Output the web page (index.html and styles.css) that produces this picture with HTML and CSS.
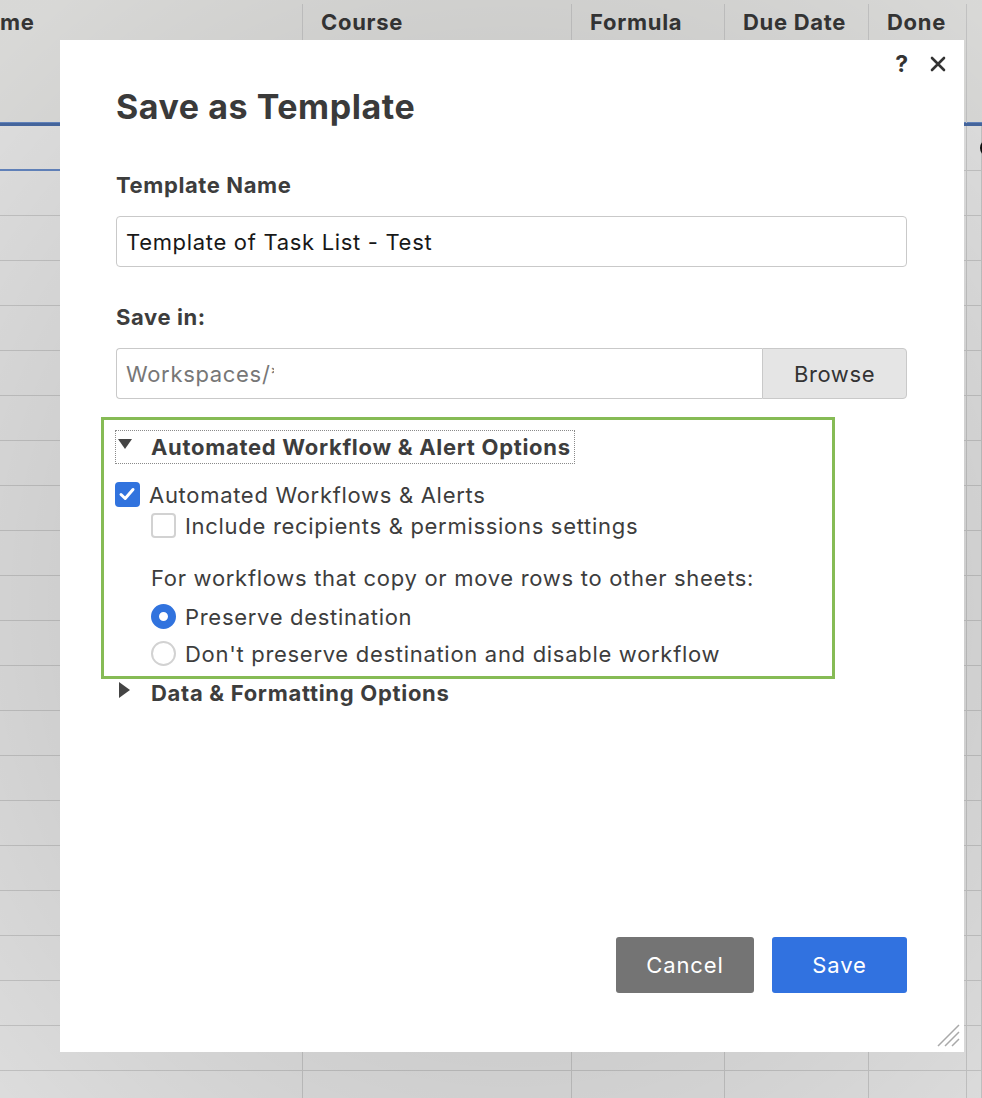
FILE: index.html
```html
<!DOCTYPE html>
<html lang="en">
<head>
<meta charset="utf-8">
<title>Save as Template</title>
<link rel="stylesheet" href="styles.css">
</head>
<body>
<div class="sheet">
  <div class="sheet-head">
    <div class="hcell col1">me</div>
    <div class="hcell col2">Course</div>
    <div class="hcell col3">Formula</div>
    <div class="hcell col4">Due Date</div>
    <div class="hcell col5">Done</div>
    <div class="hcell col6"></div>
  </div>
  <div class="sheet-first">
    <div class="fcell col1 blue"></div>
    <div class="fcell col2"></div>
    <div class="fcell col3"></div>
    <div class="fcell col4"></div>
    <div class="fcell col5"></div>
    <div class="fcell col6"><span class="ring"></span></div>
  </div>
  <div class="sheet-body">
    <div class="bcol col1"></div>
    <div class="bcol col2"></div>
    <div class="bcol col3"></div>
    <div class="bcol col4"></div>
    <div class="bcol col5"></div>
    <div class="bcol col6"></div>
  </div>
</div>

<div class="backdrop"></div>

<div class="dialog">
  <div class="dialog-tools">
    <span class="help">?</span>
    <svg class="close" width="16" height="16" viewBox="0 0 16 16"><path d="M2 2L14 14M14 2L2 14" stroke="#333" stroke-width="2.6" stroke-linecap="round"/></svg>
  </div>

  <h1 class="title">Save as Template</h1>

  <div class="label">Template Name</div>
  <div class="field"><span class="field-text">Template of Task List - Test</span></div>

  <div class="label label-save">Save in:</div>
  <div class="field-group">
    <div class="field field-path"><span class="placeholder">Workspaces/*</span></div>
    <div class="browse">Browse</div>
  </div>

  <div class="options-box">
    <div class="section-head focused">
      <span class="tri-down"></span>
      <span class="section-title">Automated Workflow &amp; Alert Options</span>
    </div>
    <div class="opt-row">
      <span class="check checked"><svg width="24" height="24" viewBox="0 0 24 24"><path d="M6 12.5L10.2 16.5L18 7.5" fill="none" stroke="#fff" stroke-width="3" stroke-linecap="round" stroke-linejoin="round"/></svg></span>
      <span class="opt-text">Automated Workflows &amp; Alerts</span>
    </div>
    <div class="opt-row indent row-include">
      <span class="check"></span>
      <span class="opt-text">Include recipients &amp; permissions settings</span>
    </div>
    <div class="note indent">For workflows that copy or move rows to other sheets:</div>
    <div class="opt-row indent row-radio1">
      <span class="radio on"></span>
      <span class="opt-text">Preserve destination</span>
    </div>
    <div class="opt-row indent row-radio2">
      <span class="radio"></span>
      <span class="opt-text">Don't preserve destination and disable workflow</span>
    </div>
  </div>

  <div class="section-head collapsed">
    <span class="tri-right"></span>
    <span class="section-title">Data &amp; Formatting Options</span>
  </div>

  <div class="footer">
    <div class="btn btn-cancel">Cancel</div>
    <div class="btn btn-save">Save</div>
  </div>

  <svg class="grip" width="24" height="24" viewBox="0 0 24 24"><path d="M23 2L2 23M23 9L9 23M23 16L16 23" stroke="#a9a9a9" stroke-width="1.5"/></svg>
</div>
</body>
</html>
```

FILE: styles.css
```css
* { box-sizing: border-box; }

html, body {
  margin: 0;
  padding: 0;
}

body {
  width: 982px;
  height: 1098px;
  overflow: hidden;
  position: relative;
  font-family: Inter, "Noto Sans", "Liberation Sans", sans-serif;
  background: #ffffff;
}

/* ---------- background sheet ---------- */
.sheet {
  width: 982px;
  height: 1098px;
  display: flex;
  flex-direction: column;
  background: #fdfdfd;
}

.sheet-head,
.sheet-first,
.sheet-body {
  display: grid;
  grid-template-columns: 303px 269px 153px 144px 98px 1fr;
}

.sheet-head {
  height: 126px;
  background: #f6f6f4;
  border-bottom: 3px solid #4f74b4;
  box-shadow: inset 0 -1px 0 #6f95d6;
}

.hcell {
  padding: 4px 0 0 18px;
  font-size: 22px;
  font-weight: 700;
  color: #3c3c3c;
  line-height: 28px;
  letter-spacing: 0.7px;
  margin-top: 4px;
  border-right: 1px solid #dcdcdc;
}

.hcell.col1 { padding-left: 0; }

.sheet-first {
  height: 45px;
}

.fcell {
  border-right: 1px solid #dcdcdc;
  border-bottom: 1px solid #dcdcdc;
  position: relative;
}

.fcell.blue { border-bottom: 2px solid #6f95d6; }

.ring {
  position: absolute;
  left: 13px;
  top: 13px;
  width: 18px;
  height: 18px;
  border: 3px solid #111;
  border-radius: 50%;
}

.sheet-body {
  flex: 1;
  background: repeating-linear-gradient(to bottom, transparent 0 44px, #dcdcdc 44px 45px);
}

.bcol { border-right: 1px solid #dcdcdc; }

/* modal backdrop */
.backdrop {
  position: absolute;
  inset: 0;
  background: radial-gradient(ellipse 75% 70% at 52% 55%, rgba(0,0,0,0.23) 0%, rgba(0,0,0,0.2) 50%, rgba(0,0,0,0.12) 100%);
}

/* ---------- dialog ---------- */
.dialog {
  position: absolute;
  left: 60px;
  top: 40px;
  width: 904px;
  height: 1012px;
  background: #fff;
  padding: 0 57px 59px 56px;
  display: flex;
  flex-direction: column;
  color: #3d3d3d;
}

.dialog-tools {
  position: absolute;
  top: 12px;
  right: 18px;
  display: flex;
  align-items: center;
  gap: 22px;
}

.help {
  font-size: 23px;
  font-weight: 700;
  color: #333;
  line-height: 24px;
}

.close { display: block; }

.title {
  margin: 50px 0 0 0;
  font-size: 34px;
  line-height: 34px;
  font-weight: 700;
  color: #3a3a3a;
  letter-spacing: 0.55px;
}

.label {
  margin-top: 49px;
  font-size: 22px;
  line-height: 24px;
  font-weight: 700;
  letter-spacing: 0.6px;
  color: #3d3d3d;
}

.label-save { margin-top: 38px; }

.field {
  margin-top: 19px;
  height: 51px;
  border: 1px solid #c9c9c9;
  border-radius: 4px;
  padding-left: 9px;
  display: flex;
  align-items: center;
  font-size: 22px;
  letter-spacing: 0.68px;
  color: #181818;
}

.field-group {
  margin-top: 19px;
  display: flex;
  height: 51px;
}

.field-group .field {
  margin-top: 0;
  flex: 1;
  border-radius: 4px 0 0 4px;
  border-right: none;
}

.placeholder {
  display: block;
  width: 148px;
  overflow: hidden;
  white-space: nowrap;
  color: #777;
}

.browse {
  width: 145px;
  background: #e5e5e5;
  border: 1px solid #c9c9c9;
  border-radius: 0 4px 4px 0;
  display: flex;
  align-items: center;
  justify-content: center;
  font-size: 22px;
  letter-spacing: 0.6px;
  color: #333;
}

/* annotation box */
.options-box {
  margin: 18px 0 0 -15px;
  width: 734px;
  border: 3px solid #86bb55;
  padding: 10px 0 10px 11px;
}

.section-head {
  display: flex;
  align-items: center;
  height: 34px;
  font-size: 22px;
  font-weight: 700;
  letter-spacing: 0.7px;
  color: #3d3d3d;
}

.section-head.focused {
  width: 460px;
  border: 1px dotted #8a8a8a;
}

.tri-down {
  width: 0;
  height: 0;
  margin-left: 2px;
  border-left: 7px solid transparent;
  border-right: 7px solid transparent;
  border-top: 10px solid #444;
  margin-top: -7px;
}

.section-title { margin-left: 19px; }

.opt-row {
  display: flex;
  align-items: center;
  margin-top: 18px;
  font-size: 22px;
  line-height: 24px;
  letter-spacing: 0.7px;
}

.opt-row .opt-text { margin-left: 9px; }

.indent { margin-left: 36px; }

.row-include { margin-top: 6px; }

.check {
  width: 25px;
  height: 25px;
  border-radius: 4px;
  border: 2px solid #d2d2d2;
  flex: none;
}

.check.checked {
  background: #3173de;
  border: none;
}

.check svg { display: block; margin: 0; }

.note {
  margin-top: 28px;
  font-size: 22px;
  line-height: 24px;
  letter-spacing: 0.7px;
}

.row-radio1 { margin-top: 14px; }
.row-radio2 { margin-top: 12px; }

.radio {
  width: 25px;
  height: 25px;
  border-radius: 50%;
  border: 2px solid #d2d2d2;
  flex: none;
}

.radio.on { border: 8px solid #3173de; }

.section-head.collapsed {
  margin-top: 2px;
  height: 24px;
}

.tri-right {
  width: 0;
  height: 0;
  margin-left: 3px;
  border-top: 8px solid transparent;
  border-bottom: 8px solid transparent;
  border-left: 11px solid #444;
  margin-top: -6px;
}

.collapsed .section-title { margin-left: 21px; }

.footer {
  margin-top: auto;
  display: flex;
  justify-content: flex-end;
  gap: 18px;
}

.btn {
  height: 56px;
  border-radius: 3px;
  display: flex;
  align-items: center;
  justify-content: center;
  font-size: 22px;
  letter-spacing: 0.9px;
  color: #fff;
}

.btn-cancel { width: 138px; background: #747474; }
.btn-save { width: 135px; background: #3172e0; }

.grip {
  position: absolute;
  right: 4px;
  bottom: 5px;
}
```
